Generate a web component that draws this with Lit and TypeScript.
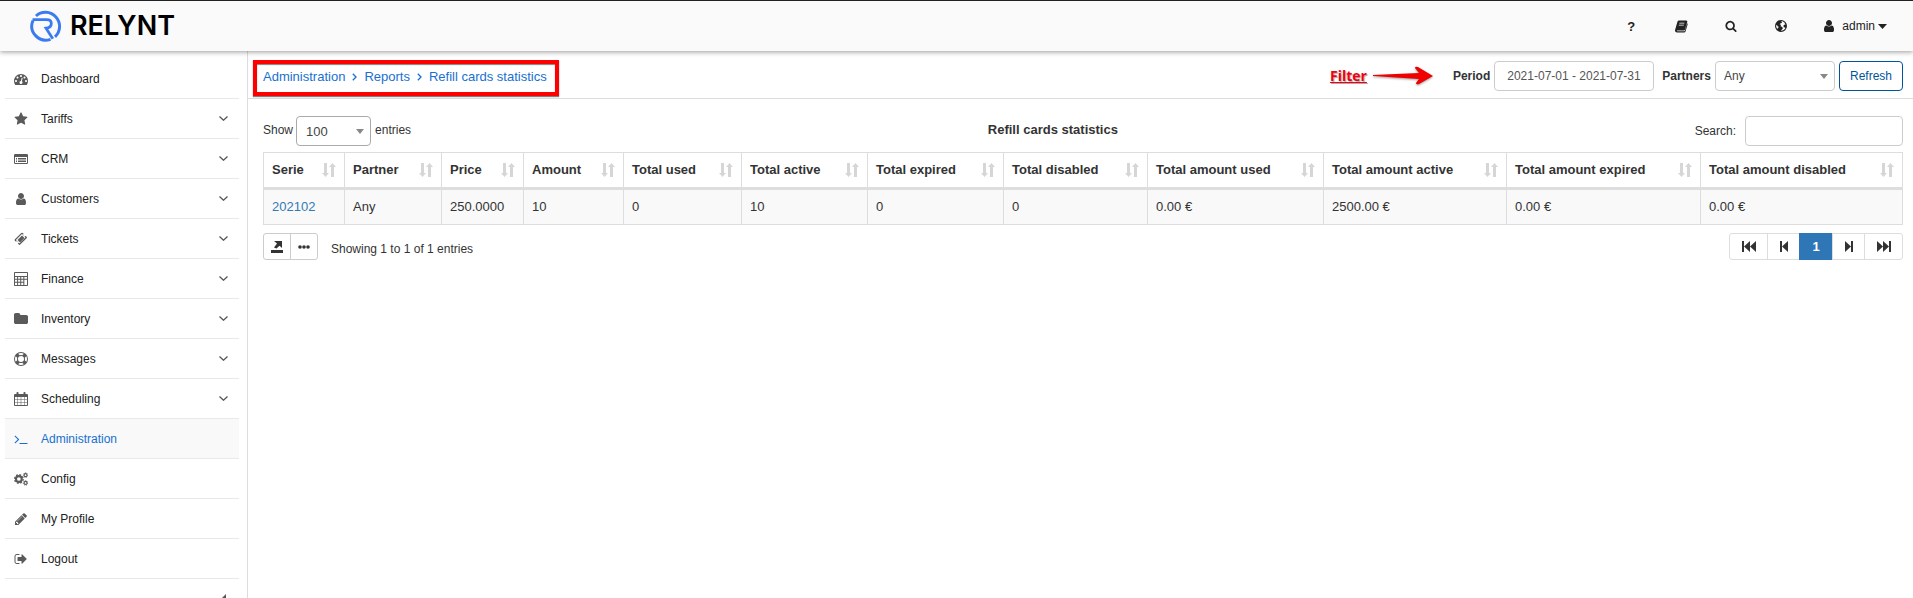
import { LitElement, html, css, svg } from "lit";
import { customElement, state } from "lit/decorators.js";

const icon = (body: unknown, size = 14, box = "0 0 1792 1792") =>
  html`<svg class="icon" width=${size} height=${size} viewBox=${box} fill="currentColor" aria-hidden="true">${body}</svg>`;

const USER = svg`<path d="M1536 1399q0 109-62.5 187t-150.5 78h-854q-88 0-150.5-78t-62.5-187q0-85 8.5-160.5t31.5-152 58.5-131 94-89 134.5-34.5q131 128 313 128t313-128q76 0 134.5 34.5t94 89 58.5 131 31.5 152 8.5 160.5zm-256-887q0 159-112.5 271.5t-271.5 112.5-271.5-112.5-112.5-271.5 112.5-271.5 271.5-112.5 271.5 112.5 112.5 271.5z"/>`;

const ICONS: Record<string, unknown> = {
  dashboard: svg`<path d="M384 1152q0-53-37.5-90.5t-90.5-37.5-90.5 37.5-37.5 90.5 37.5 90.5 90.5 37.5 90.5-37.5 37.5-90.5zm192-448q0-53-37.5-90.5t-90.5-37.5-90.5 37.5-37.5 90.5 37.5 90.5 90.5 37.5 90.5-37.5 37.5-90.5zm428 481l101-382q6-26-7.5-48.5t-38.5-29.5-48 6.5-30 39.5l-101 382q-60 5-107 43.5t-63 98.5q-20 77 20 146t117 89 146-20 89-117q16-60-6-117t-72-91zm660-33q0-53-37.5-90.5t-90.5-37.5-90.5 37.5-37.5 90.5 37.5 90.5 90.5 37.5 90.5-37.5 37.5-90.5zm-640-640q0-53-37.5-90.5t-90.5-37.5-90.5 37.5-37.5 90.5 37.5 90.5 90.5 37.5 90.5-37.5 37.5-90.5zm448 192q0-53-37.5-90.5t-90.5-37.5-90.5 37.5-37.5 90.5 37.5 90.5 90.5 37.5 90.5-37.5 37.5-90.5zm320 448q0 261-141 483-19 29-54 29h-1402q-35 0-54-29-141-221-141-483 0-182 71-348t191-286 286-191 348-71 348 71 286 191 191 286 71 348z"/>`,
  star: svg`<path d="M1728 647q0 22-26 48l-363 354 86 500q1 7 1 20 0 21-10.5 35.5t-30.5 14.5q-19 0-40-12l-449-236-449 236q-22 12-40 12-21 0-31.5-14.5t-10.5-35.5q0-6 2-20l86-500-364-354q-25-27-25-48 0-37 56-46l502-73 225-455q19-41 49-41t49 41l225 455 502 73q56 9 56 46z"/>`,
  list: svg`<path fill-rule="evenodd" d="M160 256h1472a160 160 0 0 1 160 160v960a160 160 0 0 1-160 160H160A160 160 0 0 1 0 1376V416a160 160 0 0 1 160-160zM128 640v736q0 32 32 32h1472q32 0 32-32V640zM256 768h128v128H256zm256 0h1024v128H512zM256 960h128v128H256zm256 0h1024v128H512zM256 1152h128v128H256zm256 0h1024v128H512z"/>`,
  user: USER,
  ticket: svg`<path fill-rule="evenodd" d="M1024 452l316 316-572 572-316-316zM725 1431l706-706q19-19 19-45t-19-45l-362-362q-18-18-45-18t-45 18L273 979q-19 19-19 45t19 45l362 362q18 18 45 18t45-18zm889-637L795 1614q-37 37-90.5 37t-90.5-37l-113-113q56-56 56-136t-56-136-136-56-136 56l-114-113q-37-37-37-90.5t37-90.5L934 117q37-37 90.5-37t90.5 37l113 113q-56 56-56 136t56 136 136 56 136-56l114 113q37 37 37 90t-37 89z"/>`,
  calculator: svg`<path fill-rule="evenodd" d="M128 0h1536q52 0 90 38t38 90v1536q0 52-38 90t-90 38H128q-52 0-90-38t-38-90V128q0-52 38-90t90-38zM128 128v384h1536V128zM128 640v230h270V640zm398 0v230h270V640zm398 0v230h270V640zm398 0v230h342V640zM128 998v240h270V998zm398 0v240h270V998zm398 0v240h270V998zm398 0v666h342V998zM128 1366v298h270v-298zm398 0v298h270v-298zm398 0v298h270v-298z"/>`,
  folder: svg`<path d="M1792 608v704q0 92-66 158t-158 66H224q-92 0-158-66T0 1312V352q0-92 66-158t158-66h352q92 0 158 66t66 158v32h768q92 0 158 66t66 158z"/>`,
  ring: svg`<path fill-rule="evenodd" d="M896 0a896 896 0 1 1 0 1792A896 896 0 0 1 896 0zM896 512a384 384 0 1 0 0 768 384 384 0 0 0 0-768zM896 128q-190 0-361 90l194 194q82-28 167-28t167 28l194-194q-171-90-361-90zM218 1257l194-194q-28-82-28-167t28-167L218 535q-90 171-90 361t90 361zM896 1664q190 0 361-90l-194-194q-82 28-167 28t-167-28l-194 194q171 90 361 90zM1574 1257q90-171 90-361t-90-361l-194 194q28 82 28 167t-28 167z"/>`,
  calendar: svg`<path fill-rule="evenodd" d="M128 256h1536a128 128 0 0 1 128 128v1280a128 128 0 0 1-128 128H128A128 128 0 0 1 0 1664V384a128 128 0 0 1 128-128zM128 640v288h288V640zm352 0v288h384V640zm448 0v288h384V640zm448 0v288h288V640zM128 992v320h288V992zm352 0v320h384V992zm448 0v320h384V992zm448 0v320h288V992zM128 1376v288h288v-288zm352 0v288h384v-288zm448 0v288h384v-288zm448 0v288h288v-288z"/><rect x="320" y="0" width="256" height="480" rx="110"/><rect x="1216" y="0" width="256" height="480" rx="110"/>`,
  terminal: svg`<path d="M649 983l-466 466q-10 10-23 10t-23-10l-50-50q-10-10-10-23t10-23l393-393-393-393q-10-10-10-23t10-23l50-50q10-10 23-10t23 10l466 466q10 10 10 23t-10 23zm1079 457v64q0 14-9 23t-23 9h-960q-14 0-23-9t-9-23v-64q0-14 9-23t23-9h960q14 0 23 9t9 23z"/>`,
  cogs: svg`<g fill="none" stroke="currentColor"><circle cx="620" cy="896" r="370" stroke-width="270"/><circle cx="620" cy="896" r="550" stroke-width="170" stroke-dasharray="230 202"/><circle cx="1480" cy="400" r="190" stroke-width="150"/><circle cx="1480" cy="400" r="290" stroke-width="100" stroke-dasharray="130 98"/><circle cx="1480" cy="1400" r="190" stroke-width="150"/><circle cx="1480" cy="1400" r="290" stroke-width="100" stroke-dasharray="130 98"/></g>`,
  pencil: svg`<path d="M491 1536l91-91-235-235-91 91v107h128v128h107zm523-928q0-22-22-22-10 0-17 7l-542 542q-7 7-7 17 0 22 22 22 10 0 17-7l542-542q7-7 7-17zm-54-192l416 416-832 832h-416v-416zm683 96q0 53-37 90l-166 166-416-416 166-165q36-38 90-38 53 0 91 38l235 234q37 39 37 91z"/>`,
  logout: svg`<path d="M704 1440q0 4 1 20t.5 26.5-3 23.5-10 19.5-20.5 6.5h-320q-119 0-203.5-84.5t-84.5-203.5v-704q0-119 84.5-203.5t203.5-84.5h320q13 0 22.5 9.5t9.5 22.5q0 4 1 20t.5 26.5-3 23.5-10 19.5-20.5 6.5h-320q-66 0-113 47t-47 113v704q0 66 47 113t113 47h312l11.5 1 11.5 3 8 5.5 7 9 2 13.5zm928-544q0 26-19 45l-544 544q-19 19-45 19t-45-19-19-45v-288h-448q-26 0-45-19t-19-45v-384q0-26 19-45t45-19h448v-288q0-26 19-45t45-19 45 19l544 544q19 19 19 45z"/>`,
  search: svg`<path d="M1216 832q0-185-131.5-316.5t-316.5-131.5-316.5 131.5-131.5 316.5 131.5 316.5 316.5 131.5 316.5-131.5 131.5-316.5zm512 832q0 52-38 90t-90 38q-54 0-90-38l-343-342q-179 124-399 124-143 0-273.5-55.5t-225-150-150-225-55.5-273.5 55.5-273.5 150-225 225-150 273.5-55.5 273.5 55.5 225 150 150 225 55.5 273.5q0 220-124 399l343 343q37 37 37 90z"/>`,
  book: svg`<path fill-rule="evenodd" d="M640 192h920q90 0 130 70 30 60 6 130l-290 960q-40 120-160 120H420q-60 0-70 40 0 50 90 50h880q50 0 70-50l290-960q90 40 62 150l-270 900q-40 110-170 110H380q-200 0-250-170-20-90 14-170L450 330q50-138 190-138zM700 480l-30 110h640l34-110zM630 730l-30 110h640l34-110z"/>`,
  globe: svg`<path fill-rule="evenodd" d="M896 128a768 768 0 1 1 0 1536A768 768 0 0 1 896 128zM1010 270l-90 90 110 30-60 110-170 60-90 110 130 40 50 100-60 120 180 60 130 150-60 150-130 130-20 100q340-30 520-290l-30-130-170-60-50-170 110-150 160-30q-100-330-460-420zM330 730l-60 160q10 200 140 380l110-140 110-100-170-110-60-120z"/>`,
};

const NAV = [
  { label: "Dashboard", icon: "dashboard" },
  { label: "Tariffs", icon: "star", more: true },
  { label: "CRM", icon: "list", more: true },
  { label: "Customers", icon: "user", more: true },
  { label: "Tickets", icon: "ticket", more: true },
  { label: "Finance", icon: "calculator", more: true },
  { label: "Inventory", icon: "folder", more: true },
  { label: "Messages", icon: "ring", more: true },
  { label: "Scheduling", icon: "calendar", more: true },
  { label: "Administration", icon: "terminal", active: true },
  { label: "Config", icon: "cogs" },
  { label: "My Profile", icon: "pencil" },
  { label: "Logout", icon: "logout" },
];

const COLUMNS = [
  { title: "Serie", share: 81 },
  { title: "Partner", share: 97 },
  { title: "Price", share: 82 },
  { title: "Amount", share: 100 },
  { title: "Total used", share: 118 },
  { title: "Total active", share: 126 },
  { title: "Total expired", share: 136 },
  { title: "Total disabled", share: 144 },
  { title: "Total amount used", share: 176 },
  { title: "Total amount active", share: 183 },
  { title: "Total amount expired", share: 194 },
  { title: "Total amount disabled", share: 202 },
];
const TOTAL_SHARE = COLUMNS.reduce((sum, c) => sum + c.share, 0);

const ROWS = [
  ["202102", "Any", "250.0000", "10", "0", "10", "0", "0", "0.00 €", "2500.00 €", "0.00 €", "0.00 €"],
];

const chevron = (cls: string, d: string, w: number, h: number) => html`<svg class=${cls} width=${w} height=${h} viewBox="0 0 ${w} ${h}" fill="none" stroke="currentColor" stroke-width="1.3" aria-hidden="true"><path d=${d} /></svg>`;

@customElement("app-header")
class AppHeader extends LitElement {
  static styles = css`
    :host { display: block; position: relative; z-index: 2; }
    .bar { display: flex; align-items: center; justify-content: space-between; height: 50px; padding: 0 26px 0 30px; background: #fafafa; border-top: 1px solid #222; box-shadow: 0 1px 5px rgba(0, 0, 0, 0.4); color: #222; }
    .brand { display: flex; align-items: center; gap: 8px; color: #000; text-decoration: none; font: 600 27px/36px Inter, sans-serif; }
    .tools { display: flex; align-items: center; }
    .tool { display: flex; align-items: center; justify-content: center; width: 50px; height: 36px; padding: 0; border: 0; background: none; color: inherit; font: 700 13px "Liberation Sans", Arial, sans-serif; }
    .account { display: flex; align-items: center; gap: 6px; margin-left: 16px; padding: 0; border: 0; background: none; color: inherit; font: 12px "Liberation Sans", Arial, sans-serif; }
    .caret { margin-left: -3px; }
  `;
  render() {
    return html`<header class="bar">
      <a class="brand" href="#">
        <svg width="32" height="32" viewBox="0 0 32 32" fill="none" stroke="#3b7bf0" stroke-width="3" aria-hidden="true">
          <path d="M6 6A14 14 0 0 1 25 26.800"/>
          <path d="M20.500 29.300A14 14 0 0 1 3 10.500"/>
          <path d="M2.500 9.700H16.500Q21.300 9.700 21.300 13.500Q21.300 17.500 16 18.200L22.800 28.800" stroke-width="2.800"/>
        </svg>
        <span>RELYNT</span>
      </a>
      <div class="tools">
        <button class="tool" aria-label="Help">?</button>
        <button class="tool" aria-label="Documentation">${icon(ICONS.book)}</button>
        <button class="tool" aria-label="Search">${icon(ICONS.search, 12)}</button>
        <button class="tool" aria-label="Language">${icon(ICONS.globe)}</button>
        <button class="account">${icon(USER)}<span>admin</span><svg class="caret" width="9" height="5" viewBox="0 0 9 5" aria-hidden="true"><path d="M0 0h9L4.500 5z" fill="currentColor"/></svg></button>
      </div>
    </header>`;
  }
}

@customElement("app-sidebar")
class AppSidebar extends LitElement {
  static styles = css`
    :host { display: block; flex: none; box-sizing: border-box; width: 248px; padding: 8px 8px 0 5px; border-right: 1px solid #ddd; font: 12px/16px "Liberation Sans", Arial, sans-serif; }
    .item { display: flex; align-items: center; box-sizing: border-box; height: 40px; padding: 0 11px 0 9px; border-bottom: 1px solid #e9e9e9; color: #222; text-decoration: none; }
    .item .icon { color: #5a5a5a; margin-right: 13px; }
    .active, .active .icon { background: #f9f9f9; color: #1870d0; }
    .chev { margin-left: auto; color: #555; }
    .fold { display: flex; justify-content: flex-end; padding: 15px 12px 0 0; }
    .toggle { border: 0; padding: 0; background: none; color: #555; line-height: 0; }
  `;
  render() {
    return html`<nav aria-label="Main">
        ${NAV.map(
          (n) => html`<a class="item ${n.active ? "active" : ""}" href="#">
            ${icon(ICONS[n.icon])}<span>${n.label}</span>
            ${n.more ? chevron("chev", "M.5 .5L4.500 4.200L8.500 .5", 9, 5) : ""}
          </a>`,
        )}
      </nav>
      <div class="fold"><button class="toggle" aria-label="Collapse menu"><svg width="7" height="12" viewBox="0 0 7 12" aria-hidden="true"><path d="M6 0v12L0 6z" fill="currentColor"/></svg></button></div>`;
  }
}

@customElement("app-toolbar")
class AppToolbar extends LitElement {
  static styles = css`
    :host { display: flex; align-items: flex-end; justify-content: space-between; box-sizing: border-box; height: 48px; padding: 0 10px 2px 5px; border-bottom: 1px solid #ddd; font: 13px/16px "Liberation Sans", Arial, sans-serif; color: #333; }
    .crumbs { display: flex; align-items: center; box-sizing: border-box; height: 36px; padding: 0 8px 2px 6px; gap: 7px; border: 4px solid #f00; box-shadow: 0 1px 1px rgba(0, 0, 0, 0.5), inset 0 1px 1px rgba(0, 0, 0, 0.5); }
    .crumb { color: #1870d0; text-decoration: none; }
    .sep { color: #1870d0; }
    .filter { display: flex; align-items: center; padding-bottom: 5px; }
    .note { display: flex; align-items: center; gap: 6px; margin-right: 20px; color: #f00010; font: 700 14px/16px "Open Sans", sans-serif; text-decoration: underline; text-shadow: 1px 1px 1px #aaa; }
    .arrow { filter: drop-shadow(0 1px 1px #999); }
    .label { font-weight: 700; font-size: 12px; margin-right: 4px; }
    .box { box-sizing: border-box; height: 30px; border: 1px solid #ccc; border-radius: 4px; background: #fff; font: 12px "Liberation Sans", Arial, sans-serif; color: #555; }
    .date { width: 160px; padding: 0 12px; margin-right: 8px; }
    .pick { position: relative; display: flex; align-items: center; margin-right: 4px; }
    .select { width: 120px; padding: 0 8px; appearance: none; color: #444; }
    .caret { position: absolute; right: 7px; pointer-events: none; }
    .refresh { padding: 0 10px; border-color: #00559a; color: #00559a; }
  `;
  render() {
    return html`<nav class="crumbs" aria-label="Breadcrumb">
        <a class="crumb" href="#">Administration</a>${chevron("sep", "M.8 .8L4 4L.8 7.200", 5, 8)}
        <a class="crumb" href="#">Reports</a>${chevron("sep", "M.8 .8L4 4L.8 7.200", 5, 8)}
        <a class="crumb" href="#">Refill cards statistics</a>
      </nav>
      <div class="filter">
        <span class="note">Filter<svg class="arrow" width="60" height="20" viewBox="0 0 60 20" aria-hidden="true"><path d="M0 9L46 7L42 2Q42 0 45 1L60 10L46 18Q43 19 43 17L46 13L0 10z" fill="#f00000"/></svg></span>
        <label class="label" for="period">Period</label>
        <input class="box date" id="period" type="text" value="2021-07-01 - 2021-07-31" />
        <label class="label" for="partners">Partners</label>
        <span class="pick"><select class="box select" id="partners"><option>Any</option></select>
          <svg class="caret" width="8" height="5" viewBox="0 0 8 5" aria-hidden="true"><path d="M0 0h8L4 5z" fill="#888"/></svg></span>
        <button class="box refresh">Refresh</button>
      </div>`;
  }
}

@customElement("stats-table")
class StatsTable extends LitElement {
  @state() private query = "";
  static styles = css`
    :host { display: block; padding: 17px 10px 0 15px; font: 12px/16px "Liberation Sans", Arial, sans-serif; color: #333; }
    .top { display: flex; justify-content: space-between; align-items: center; padding-bottom: 6px; }
    .length, .search { display: flex; align-items: center; }
    .search { gap: 9px; }
    .title { margin: 0; font-size: 13px; font-weight: 700; line-height: 28px; align-self: start; }
    .pick { position: relative; display: flex; align-items: center; margin: 0 4px 0 3px; }
    .box { box-sizing: border-box; height: 30px; border: 1px solid #aaa; border-radius: 4px; background: #fff; color: #444; font: 13px "Liberation Sans", Arial, sans-serif; }
    .select { width: 75px; padding: 0 9px; appearance: none; }
    .caret { position: absolute; right: 7px; pointer-events: none; }
    .query { width: 158px; border-color: #ccc; padding: 0 8px; }
    .text { align-self: start; line-height: 28px; }
    .grid { width: 100%; table-layout: fixed; border-collapse: collapse; font-size: 13px; line-height: 18px; }
    .head, .cell { border: 1px solid #ddd; padding: 8px; text-align: left; white-space: nowrap; }
    .head { border-bottom-width: 3px; }
    .headrow { display: flex; align-items: center; justify-content: space-between; }
    .cell { background: #f9f9f9; }
    .link { color: #337ab7; text-decoration: none; }
    .foot { display: flex; justify-content: space-between; padding-top: 8px; }
    .left { display: flex; gap: 13px; }
    .group { display: flex; }
    .btn { display: flex; align-items: center; justify-content: center; box-sizing: border-box; width: 28px; height: 27px; margin-left: -1px; padding: 0; border: 1px solid #ccc; background: #fff; color: #333; }
    .btn:first-child { margin-left: 0; border-radius: 3px 0 0 3px; }
    .btn:last-child { border-radius: 0 3px 3px 0; }
    .info { line-height: 32px; }
    .page { width: 33px; border-color: #ddd; font: 700 13px "Liberation Sans", Arial, sans-serif; }
    .wide { width: 39px; }
    .current { width: 34px; background: #2e76b5; border-color: #2e76b5; color: #fff; }
  `;
  private onQuery(e: Event) {
    this.query = (e.target as HTMLInputElement).value.toLowerCase();
  }
  render() {
    const rows = ROWS.filter((r) => r.join(" ").toLowerCase().includes(this.query));
    return html`<div class="top">
        <div class="length"><label class="text" for="length">Show</label>
          <span class="pick"><select class="box select" id="length"><option>100</option></select>
            <svg class="caret" width="8" height="5" viewBox="0 0 8 5" aria-hidden="true"><path d="M0 0h8L4 5z" fill="#888"/></svg></span>
          <span class="text">entries</span></div>
        <h1 class="title">Refill cards statistics</h1>
        <div class="search"><label for="query">Search:</label><input class="box query" id="query" type="search" @input=${this.onQuery} /></div>
      </div>
      <table class="grid">
        <colgroup>${COLUMNS.map((c) => html`<col style="width:${(c.share / TOTAL_SHARE) * 100}%" />`)}</colgroup>
        <thead><tr>${COLUMNS.map((c) => html`<th class="head" scope="col"><div class="headrow"><span>${c.title}</span>
          <svg width="14" height="14" viewBox="0 0 14 14" fill="#d6d6d6" aria-hidden="true"><path d="M2 0h3v10h2L3.500 14 0 10h2zM9 14h3V4h2L10.500 0 7 4h2z"/></svg></div></th>`)}</tr></thead>
        <tbody>${rows.map((r) => html`<tr>${r.map((v, i) => html`<td class="cell">${i === 0 ? html`<a class="link" href="#">${v}</a>` : v}</td>`)}</tr>`)}</tbody>
      </table>
      <div class="foot">
        <div class="left">
          <div class="group">
            <button class="btn" aria-label="Export"><svg width="12" height="13" viewBox="0 0 12 13" fill="currentColor" aria-hidden="true"><path d="M0 10h12v3H0zM3 1h8v7L8.500 5.700 5.500 8.500 3 7.500 6 3.500z"/></svg></button>
            <button class="btn" aria-label="More"><svg width="12" height="4" viewBox="0 0 12 4" fill="currentColor" aria-hidden="true"><circle cx="2" cy="2" r="1.800"/><circle cx="6" cy="2" r="1.800"/><circle cx="10" cy="2" r="1.800"/></svg></button>
          </div>
          <span class="info">Showing 1 to 1 of 1 entries</span>
        </div>
        <nav class="group" aria-label="Pages">
          <button class="btn page wide" aria-label="First"><svg width="14" height="11" viewBox="0 0 14 11" fill="currentColor" aria-hidden="true"><path d="M0 0h2v11H0zM8 0v11L2 5.500zM14 0v11L8 5.500z"/></svg></button>
          <button class="btn page" aria-label="Previous"><svg width="8" height="11" viewBox="0 0 8 11" fill="currentColor" aria-hidden="true"><path d="M0 0h2v11H0zM8 0v11L2 5.500z"/></svg></button>
          <button class="btn page current" aria-current="page">1</button>
          <button class="btn page" aria-label="Next"><svg width="8" height="11" viewBox="0 0 8 11" fill="currentColor" aria-hidden="true"><path d="M6 0h2v11H6zM0 0v11l6-5.500z"/></svg></button>
          <button class="btn page wide" aria-label="Last"><svg width="14" height="11" viewBox="0 0 14 11" fill="currentColor" aria-hidden="true"><path d="M12 0h2v11h-2zM0 0v11l6-5.500zM6 0v11l6-5.500z"/></svg></button>
        </nav>
      </div>`;
  }
}

@customElement("app-root")
class AppRoot extends LitElement {
  static styles = css`
    :host { display: flex; flex-direction: column; height: 100vh; overflow: hidden; background: #fff; }
    .body { display: flex; flex: 1; min-height: 0; }
    .main { flex: 1; min-width: 0; }
  `;
  render() {
    return html`<app-header></app-header>
      <div class="body">
        <app-sidebar></app-sidebar>
        <main class="main"><app-toolbar></app-toolbar><stats-table></stats-table></main>
      </div>`;
  }
}
